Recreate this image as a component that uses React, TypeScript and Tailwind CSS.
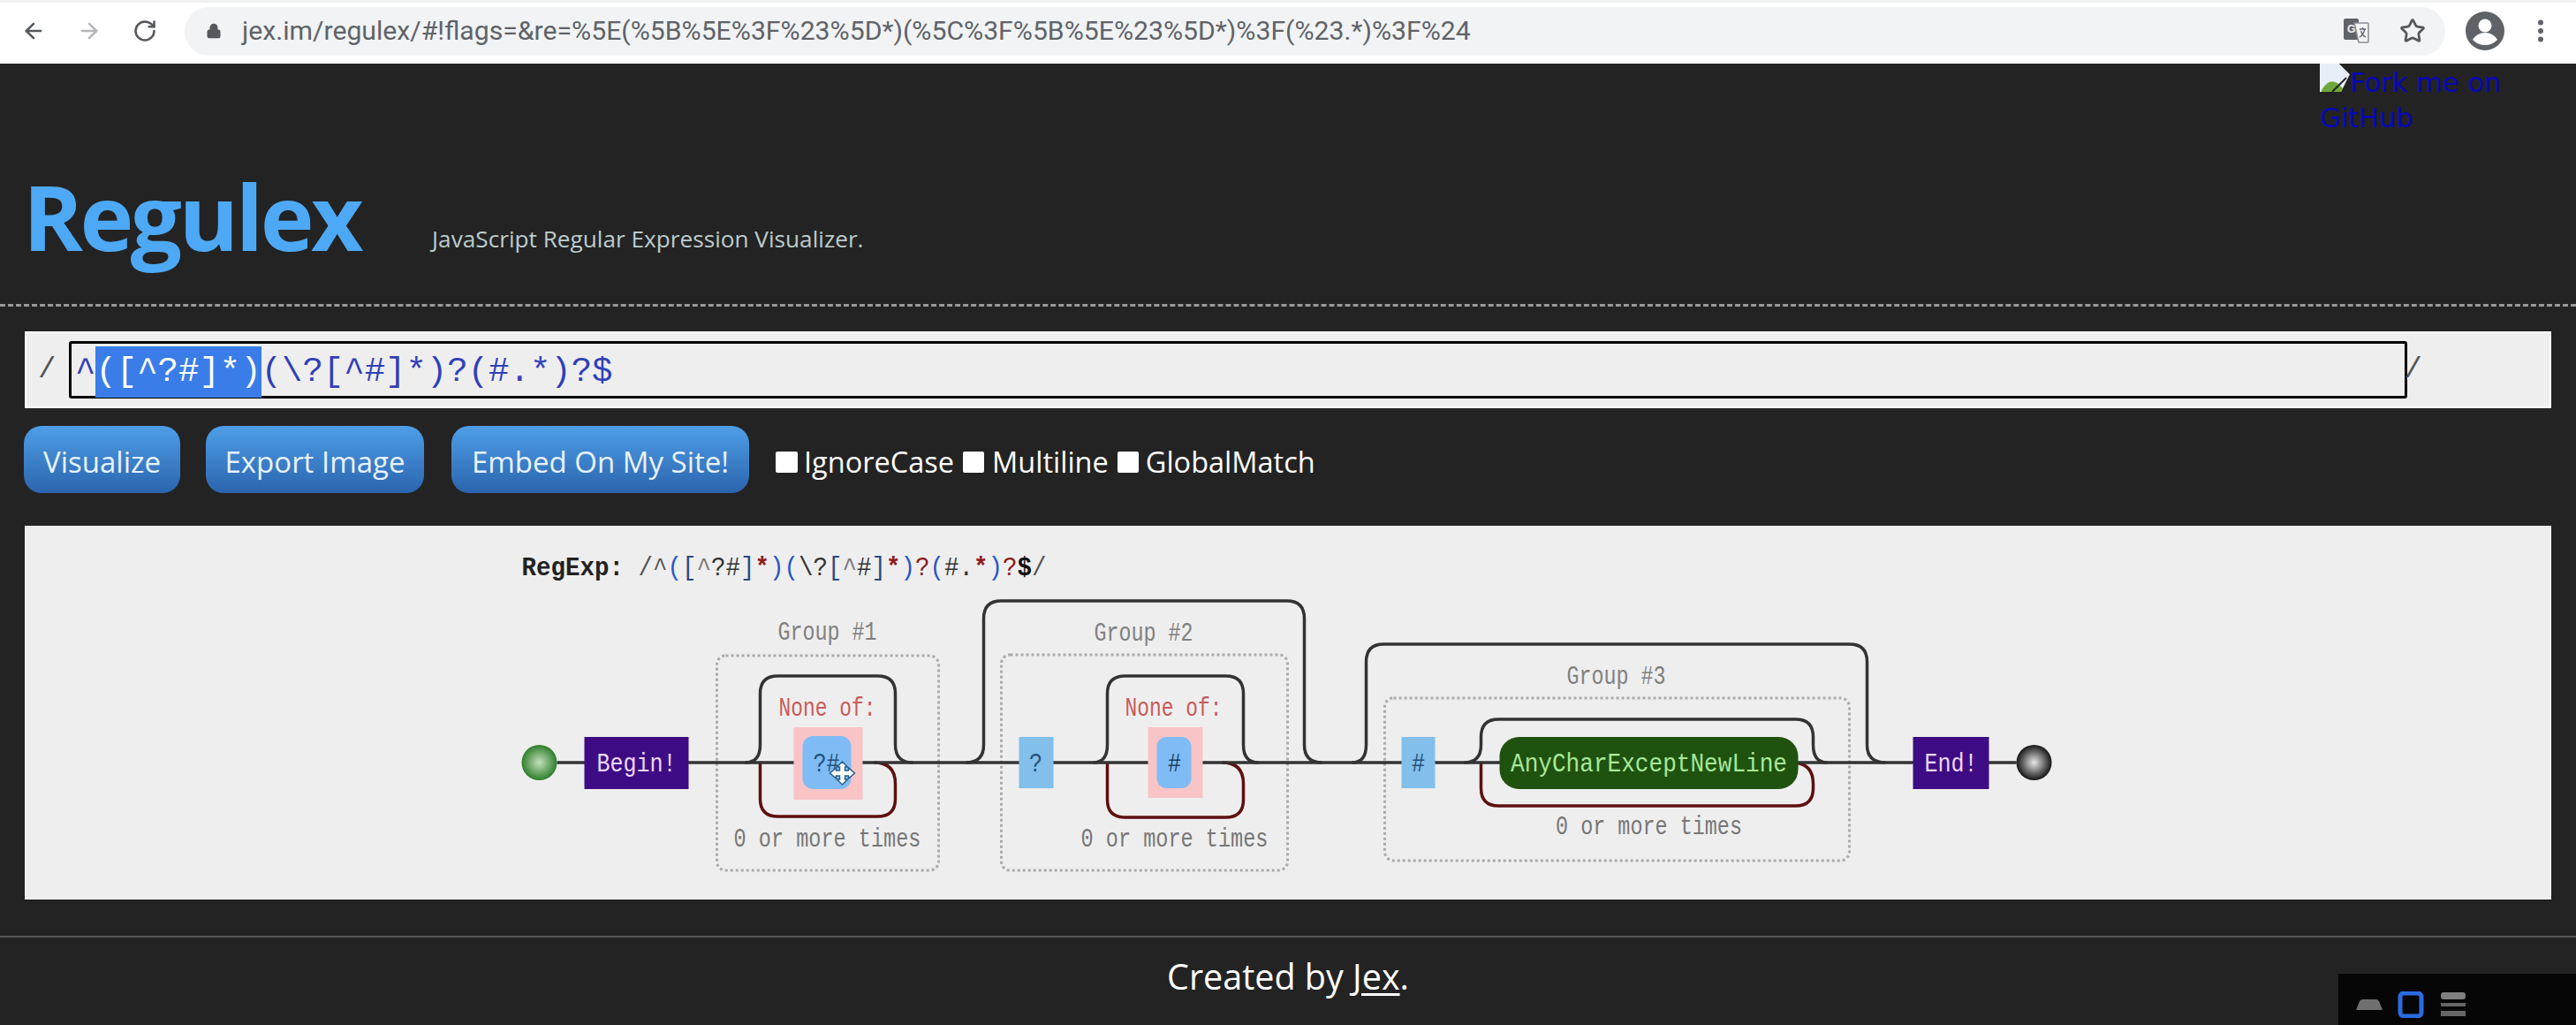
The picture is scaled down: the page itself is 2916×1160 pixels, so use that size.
import { ArrowLeft, ArrowRight, RotateCw, Lock, Star } from 'lucide-react'

const MONO = "'Liberation Mono', monospace"

function Label({ x, y, w, fill, size = 29, weight, children }: { x: number; y: number; w: number; fill: string; size?: number; weight?: number; children: React.ReactNode }) {
  return (
    <text
      x={x}
      y={y}
      textAnchor="middle"
      textLength={w}
      lengthAdjust="spacingAndGlyphs"
      fill={fill}
      fontSize={size}
      fontWeight={weight}
      fontFamily={MONO}
    >
      {children}
    </text>
  )
}

// 上のスキップ線と下のループ線
function skipPath(x0: number, left: number, top: number, right: number, x1: number, r = 20) {
  return `M${x0} 863 Q${left} 863 ${left} 843 L${left} ${top + r} Q${left} ${top} ${left + r} ${top} L${right - r} ${top} Q${right} ${top} ${right} ${top + r} L${right} 843 Q${right} 863 ${x1} 863`
}

function loopPath(left: number, bottom: number, right: number, r = 20) {
  return `M${right - 24} 863 Q${right} 863 ${right} 887 L${right} ${bottom - r} Q${right} ${bottom} ${right - r} ${bottom} L${left + r} ${bottom} Q${left} ${bottom} ${left} ${bottom - r} L${left} 863`
}

function Diagram() {
  const mono = { fontFamily: MONO }
  return (
    <svg viewBox="28 595 2859 423" className="w-full h-full block" style={mono}>
      <defs>
        <radialGradient id="startBall">
          <stop offset="0%" stopColor="#c4e0bc" />
          <stop offset="100%" stopColor="#2f7f2c" />
        </radialGradient>
        <radialGradient id="endBall">
          <stop offset="0%" stopColor="#e8e8e8" />
          <stop offset="100%" stopColor="#161616" />
        </radialGradient>
      </defs>

      <text transform="translate(590 651) scale(0.9167 1)" fontSize={30} fill="#333">
        <tspan fontWeight={700} fill="#222">RegExp: </tspan>
        <tspan fill="#555">/^</tspan>
        <tspan fill="#2a55c8">(</tspan>
        <tspan fill="#2a4a80">[</tspan>
        <tspan fill="#777">^</tspan>
        <tspan>?#</tspan>
        <tspan fill="#2a4a80">]</tspan>
        <tspan fill="#8c1c1c" fontWeight={700}>*</tspan>
        <tspan fill="#2a55c8">)(</tspan>
        <tspan>\?</tspan>
        <tspan fill="#2a4a80">[</tspan>
        <tspan fill="#777">^</tspan>
        <tspan>#</tspan>
        <tspan fill="#2a4a80">]</tspan>
        <tspan fill="#8c1c1c" fontWeight={700}>*</tspan>
        <tspan fill="#2a55c8">)</tspan>
        <tspan fill="#8c1c1c">?</tspan>
        <tspan fill="#2a55c8">(</tspan>
        <tspan>#.</tspan>
        <tspan fill="#8c1c1c" fontWeight={700}>*</tspan>
        <tspan fill="#2a55c8">)</tspan>
        <tspan fill="#8c1c1c">?</tspan>
        <tspan fill="#111" fontWeight={700}>$</tspan>
        <tspan fill="#555">/</tspan>
      </text>

      {/* グループ枠 */}
      <g fill="none" stroke="#aaaaaa" strokeWidth={3} strokeDasharray="3 3">
        <rect x={811} y={742} width={251} height={243} rx={10} />
        <rect x={1133} y={741} width={324} height={244} rx={10} />
        <rect x={1567} y={790} width={526} height={184} rx={10} />
      </g>

      {/* ループ線 */}
      <g fill="none" stroke="#5e1010" strokeWidth={3.5}>
        <path d={loopPath(860, 924, 1013)} />
        <path d={loopPath(1253, 925, 1407)} />
        <path d={loopPath(1676, 912, 2052)} />
      </g>

      {/* 本線 */}
      <path d="M630 863 L2282 863" stroke="#333" strokeWidth={3.5} fill="none" />

      {/* スキップ線 */}
      <g fill="none" stroke="#333" strokeWidth={3.5}>
        <path d={skipPath(843, 860, 765, 1013, 1033)} />
        <path d={skipPath(1093, 1113, 680, 1476, 1496)} />
        <path d={skipPath(1237, 1253, 765, 1407, 1424)} />
        <path d={skipPath(1530, 1546, 729, 2113, 2134)} />
        <path d={skipPath(1657, 1676, 814, 2052, 2068)} />
      </g>

      <circle cx={610} cy={863} r={20} fill="url(#startBall)" />
      <rect x={661} y={834} width={118} height={59} fill="#3d0c85" />
      <Label x={720} y={873} w={90} fill="#f0d8ff">Begin!</Label>

      {/* Group #1 */}
      <Label x={936} y={724} w={112} fill="#808080">Group #1</Label>
      <Label x={936} y={810} w={110} fill="#c95a5a">None of:</Label>
      <rect x={898} y={823} width={78} height={82} fill="#f8c4c6" />
      <rect x={908} y={833} width={55} height={60} rx={12} fill="#7fbcf5" />
      <Label x={935} y={873} w={30} fill="#24507c">?#</Label>
      <Label x={936} y={958} w={212} fill="#777">0 or more times</Label>

      {/* カーソル */}
      <g transform="translate(953 875)">
        <path
          d="M0 -13 L6 -7 L3 -7 L3 -3 L7 -3 L7 -6 L14 0 L7 6 L7 3 L3 3 L3 7 L6 7 L0 13 L-6 7 L-3 7 L-3 3 L-7 3 L-7 6 L-14 0 L-7 -6 L-7 -3 L-3 -3 L-3 -7 L-6 -7 Z"
          fill="#fff"
          stroke="#2d5f88"
          strokeWidth={1.5}
        />
      </g>

      {/* Group #2 */}
      <Label x={1294} y={725} w={112} fill="#808080">Group #2</Label>
      <rect x={1153} y={834} width={39} height={58} fill="#82bfea" />
      <Label x={1172} y={873} w={15} fill="#24507c">?</Label>
      <Label x={1328} y={810} w={110} fill="#c95a5a">None of:</Label>
      <rect x={1299} y={823} width={62} height={80} fill="#f8c4c6" />
      <rect x={1309} y={834} width={39} height={58} rx={11} fill="#7fbcf5" />
      <Label x={1329} y={873} w={15} fill="#1c3f66">#</Label>
      <Label x={1329} y={958} w={212} fill="#777">0 or more times</Label>

      {/* Group #3 */}
      <Label x={1829} y={774} w={112} fill="#808080">Group #3</Label>
      <rect x={1586} y={834} width={38} height={58} fill="#82bfea" />
      <Label x={1605} y={873} w={15} fill="#24507c">#</Label>
      <rect x={1697} y={834} width={338} height={59} rx={22} fill="#1f520f" />
      <Label x={1866} y={873} w={313} fill="#a8e89a">AnyCharExceptNewLine</Label>
      <Label x={1866} y={944} w={211} fill="#777">0 or more times</Label>

      <rect x={2165} y={834} width={86} height={59} fill="#3d0c85" />
      <Label x={2208} y={873} w={60} fill="#f0d8ff">End!</Label>
      <circle cx={2302} cy={863} r={20} fill="url(#endBall)" />
    </svg>
  )
}

function BrowserBar() {
  return (
    <div className="h-[72px] shrink-0 bg-white border-t-[3px] border-[#f0f1f2] flex items-center pl-[24px] pr-[36px] pb-[5px]">
      <ArrowLeft className="w-[28px] h-[28px] text-[#55585c]" strokeWidth={2.2} />
      <ArrowRight className="w-[28px] h-[28px] text-[#b4b6b9] ml-[35px]" strokeWidth={2.2} />
      <RotateCw className="w-[28px] h-[28px] text-[#55585c] ml-[35px]" strokeWidth={2.2} />
      <div className="ml-[31px] flex-1 h-[55px] rounded-full bg-[#f1f3f4] flex items-center pl-[24px] pr-[22px]">
        <Lock className="w-[18px] h-[22px] text-[#55585c] fill-[#55585c]" strokeWidth={2} />
        <span className="ml-[23px] flex-1 whitespace-nowrap text-[30.2px] text-[#5f6368] [font-family:Roboto,sans-serif]">
          jex.im/regulex/#!flags=&amp;re=%5E(%5B%5E%3F%23%5D*)(%5C%3F%5B%5E%23%5D*)%3F(%23.*)%3F%24
        </span>
        <svg viewBox="0 0 30 30" className="w-[30px] h-[30px]">
          <rect x="1" y="1" width="17" height="24" rx="2" fill="#5f6368" />
          <path d="M13 6 H28 a1 1 0 0 1 1 1 V27 a1 1 0 0 1-1 1 H18 Z" fill="#f1f3f4" stroke="#8a8d91" strokeWidth="1.5" />
          <text x="5" y="17" fontSize="12" fontWeight="700" fill="#f1f3f4" fontFamily="'Liberation Sans', sans-serif">G</text>
          <path d="M19 13 H26 M22.5 11 V13 M25 13 Q23 20 19 22 M20.5 15 Q22 20 26 22" stroke="#5f6368" strokeWidth="1.3" fill="none" />
        </svg>
        <Star className="w-[30px] h-[30px] ml-[34px] text-[#55585c]" strokeWidth={2.2} />
      </div>
      <svg viewBox="0 0 44 44" className="w-[44px] h-[44px] ml-[23px]">
        <circle cx="22" cy="22" r="22" fill="#5f6368" />
        <circle cx="22" cy="16" r="7.5" fill="#fff" />
        <path d="M8 32 Q13 24 22 24 Q31 24 36 32 Q30 38 22 38 Q14 38 8 32 Z" fill="#fff" />
      </svg>
      <svg viewBox="0 0 8 26" className="w-[8px] h-[26px] ml-[37px]">
        <circle cx="4" cy="3.5" r="3" fill="#5f6368" />
        <circle cx="4" cy="13" r="3" fill="#5f6368" />
        <circle cx="4" cy="22.5" r="3" fill="#5f6368" />
      </svg>
    </div>
  )
}

export default function App() {
  return (
    <div className="w-[2916px] h-[1160px] relative overflow-hidden bg-[#232323] flex flex-col [font-family:'Open_Sans',sans-serif]">
      <BrowserBar />

      {/* ヘッダー */}
      <div className="h-[275px] shrink-0 flex items-end border-b-[3px] border-dashed border-[#999] pl-[26px] pb-[30px]">
        <h1 className="text-[103px] leading-[140px] font-bold text-[#4da9f5] tracking-[-3.5px]">Regulex</h1>
        <p className="ml-[81px] mb-[26px] text-[26.2px] leading-[36px] text-[#bccccc]">JavaScript Regular Expression Visualizer.</p>
      </div>

      {/* 入力欄 */}
      <div className="mt-[28px] mx-[28px] h-[87px] shrink-0 bg-[#eeeeee] border-2 border-white flex items-center pl-[13px] pr-[144px] text-[#555] [font-family:'Liberation_Mono',monospace] text-[39px]">
        <span className="w-[35px] text-[34px]">/</span>
        <div className="flex-1 h-[65px] border-[3px] border-black rounded-[3px] pl-[4px] pt-[5px] flex items-center whitespace-nowrap text-[#3040b8]">
          <span>^</span>
          <span className="bg-[#3a7de8] text-white">([^?#]*)</span>
          <span>(\?[^#]*)?(#.*)?$</span>
        </div>
        <span className="ml-[-3px] text-[34px]">/</span>
      </div>

      {/* ボタン */}
      <div className="mt-[20px] ml-[27px] flex items-center shrink-0 h-[76px] text-[33px] text-white">
        <button className="w-[177px] h-[76px] pt-[5px] rounded-[20px] bg-gradient-to-b from-[#4f9ee8] to-[#2b65ae] text-[#e8f2ff]">Visualize</button>
        <button className="w-[247px] h-[76px] pt-[5px] ml-[29px] rounded-[20px] bg-gradient-to-b from-[#4f9ee8] to-[#2b65ae] text-[#e8f2ff]">Export Image</button>
        <button className="w-[337px] h-[76px] pt-[5px] ml-[31px] rounded-[20px] bg-gradient-to-b from-[#4f9ee8] to-[#2b65ae] text-[#e8f2ff]">Embed On My Site!</button>
        <span className="w-[25px] h-[24px] mt-[6px] bg-white ml-[30px] rounded-[2px]" />
        <span className="ml-[7px] pt-[6px] text-[32.5px]">IgnoreCase</span>
        <span className="w-[24px] h-[24px] mt-[6px] bg-white ml-[10px] rounded-[2px]" />
        <span className="ml-[9px] pt-[6px] text-[32.5px]">Multiline</span>
        <span className="w-[24px] h-[24px] mt-[6px] bg-white ml-[10px] rounded-[2px]" />
        <span className="ml-[8px] pt-[6px] text-[32.5px]">GlobalMatch</span>
      </div>

      {/* ダイアグラム */}
      <div className="mt-[37px] mx-[28px] h-[423px] shrink-0 bg-[#eeeeee]">
        <Diagram />
      </div>

      {/* フッター */}
      <div className="mt-[41px] border-t-2 border-[#555] h-[99px] flex justify-center pt-[18px] text-[39.5px] leading-[52px] text-white">
        <span>Created by <span className="underline underline-offset-4">Jex</span>.</span>
      </div>

      {/* 読み込めなかった画像 */}
      <div className="absolute left-[2626px] top-[74px] w-[230px] text-[30.5px] leading-[40px] text-[#0808b8] [font-family:'DejaVu_Sans',sans-serif]">
        <svg viewBox="0 0 34 32" className="inline-block w-[34px] h-[32px] align-top -mt-[2px]">
          <path d="M0 0 H22 L34 12 L24 32 H0 Z" fill="#e8eef8" />
          <path d="M2 30 Q10 16 20 22 L26 28 L24 32 H2 Z" fill="#6fa83a" />
          <path d="M22 0 L34 12 L34 0 Z" fill="#232323" />
          <path d="M14 32 L30 16" stroke="#232323" strokeWidth="2" />
        </svg>
        <span>Fork me on</span>
        <br />
        <span>GitHub</span>
      </div>

      {/* 録画ツールのトレイ */}
      <div className="absolute right-0 bottom-0 w-[269px] h-[58px] bg-[#060606] flex items-center pl-[20px] pt-[12px]">
        <svg viewBox="0 0 30 12" className="w-[30px] h-[12px]">
          <path d="M0 12 L4 2 Q5 0 8 0 H22 Q25 0 26 2 L30 12 Z" fill="#707070" />
        </svg>
        <svg viewBox="0 0 30 30" className="w-[30px] h-[30px] ml-[17px]">
          <rect x="3" y="2" width="24" height="26" rx="4" fill="none" stroke="#2a6be0" strokeWidth="5" />
        </svg>
        <svg viewBox="0 0 28 28" className="w-[28px] h-[28px] ml-[19px]">
          <rect x="0" y="0" width="28" height="8" rx="3" fill="#808080" />
          <rect x="0" y="12" width="28" height="4" fill="#666" />
          <rect x="0" y="21" width="28" height="6" fill="#666" />
        </svg>
      </div>
    </div>
  )
}
